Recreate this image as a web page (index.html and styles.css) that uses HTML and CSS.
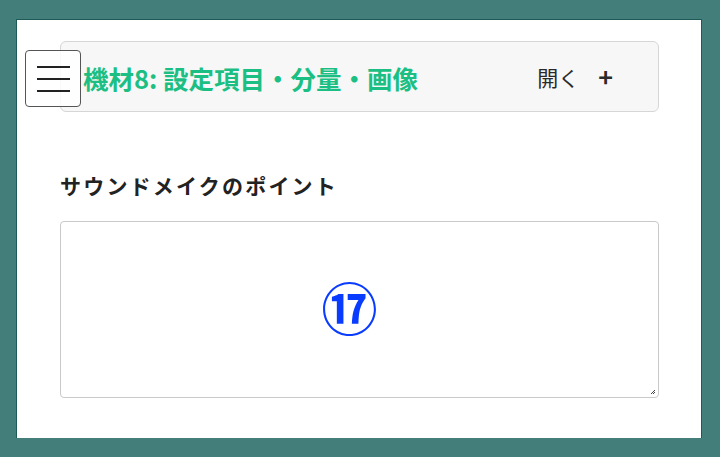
FILE: index.html
```html
<!DOCTYPE html>
<html lang="ja">
<head>
<meta charset="utf-8">
<link rel="stylesheet" href="styles.css">
</head>
<body>
<div class="panel">
  <div class="acc">
    <div class="acc-title">機材8: 設定項目・分量・画像</div>
    <div class="acc-toggle"><span class="open">開く</span><span class="plus">+</span></div>
  </div>
  <div class="label">サウンドメイクのポイント</div>
  <div class="area">
    <span class="mark">⑰</span>
    <svg class="grip" width="6" height="6" viewBox="0 0 6 6"><path d="M5 1 L1 5 M5 3 L3 5" stroke="#444" stroke-width="1"/></svg>
  </div>
  <button class="burger" aria-label="menu"><span></span><span></span><span></span></button>
</div>
</body>
</html>
```
FILE: styles.css
```css
html, body { margin: 0; padding: 0; }
body {
  background: #437e7b;
  width: 720px;
  height: 457px;
  overflow: hidden;
  font-family: "Noto Sans CJK JP", "Noto Sans", sans-serif;
  padding: 19px 0 0 16px;
  box-sizing: border-box;
}
.panel {
  position: relative;
  width: 686px;
  height: 419px;
  box-sizing: border-box;
  background: #fff;
  border: 1px solid #1e5a58;
  border-bottom: none;
  padding: 21px 42px 0 43px;
}
.acc {
  height: 71px;
  box-sizing: border-box;
  background: #f7f7f7;
  border: 1px solid #d6d6d6;
  border-radius: 6px;
  display: flex;
  align-items: center;
  justify-content: space-between;
  padding: 0 45px 0 22px;
}
.acc-title {
  color: #1cbf83;
  font-weight: 700;
  font-size: 25.5px;
  line-height: 1;
  white-space: nowrap;
  margin-top: 2px;
}
.acc-toggle {
  display: flex;
  align-items: center;
  gap: 19px;
  color: #2a2a2a;
  font-size: 21px;
}
.plus { font-weight: 700; font-size: 25px; line-height: 1; }
.label {
  margin-top: 63px;
  font-size: 21px;
  font-weight: 700;
  color: #222;
  letter-spacing: 2.2px;
  line-height: 1;
}
.area {
  position: relative;
  margin-top: 25px;
  height: 177px;
  box-sizing: border-box;
  border: 1px solid #c9c9c9;
  border-radius: 4px;
  display: flex;
  align-items: center;
  justify-content: center;
  padding-right: 20px;
}
.mark {
  color: #0a3cff;
  font-size: 56px;
  line-height: 1;
  font-weight: 700;
  margin-top: -8px;
}
.grip { position: absolute; right: 2px; bottom: 2px; }
.burger {
  position: absolute;
  left: 8px;
  top: 30px;
  width: 56px;
  height: 57px;
  box-sizing: border-box;
  background: rgba(255,255,255,0.85);
  border: 1px solid #555;
  border-radius: 4px;
  padding: 0;
  display: flex;
  flex-direction: column;
  align-items: center;
  justify-content: center;
  gap: 10px;
}
.burger span { display: block; width: 33px; height: 2px; background: #222; }
```
